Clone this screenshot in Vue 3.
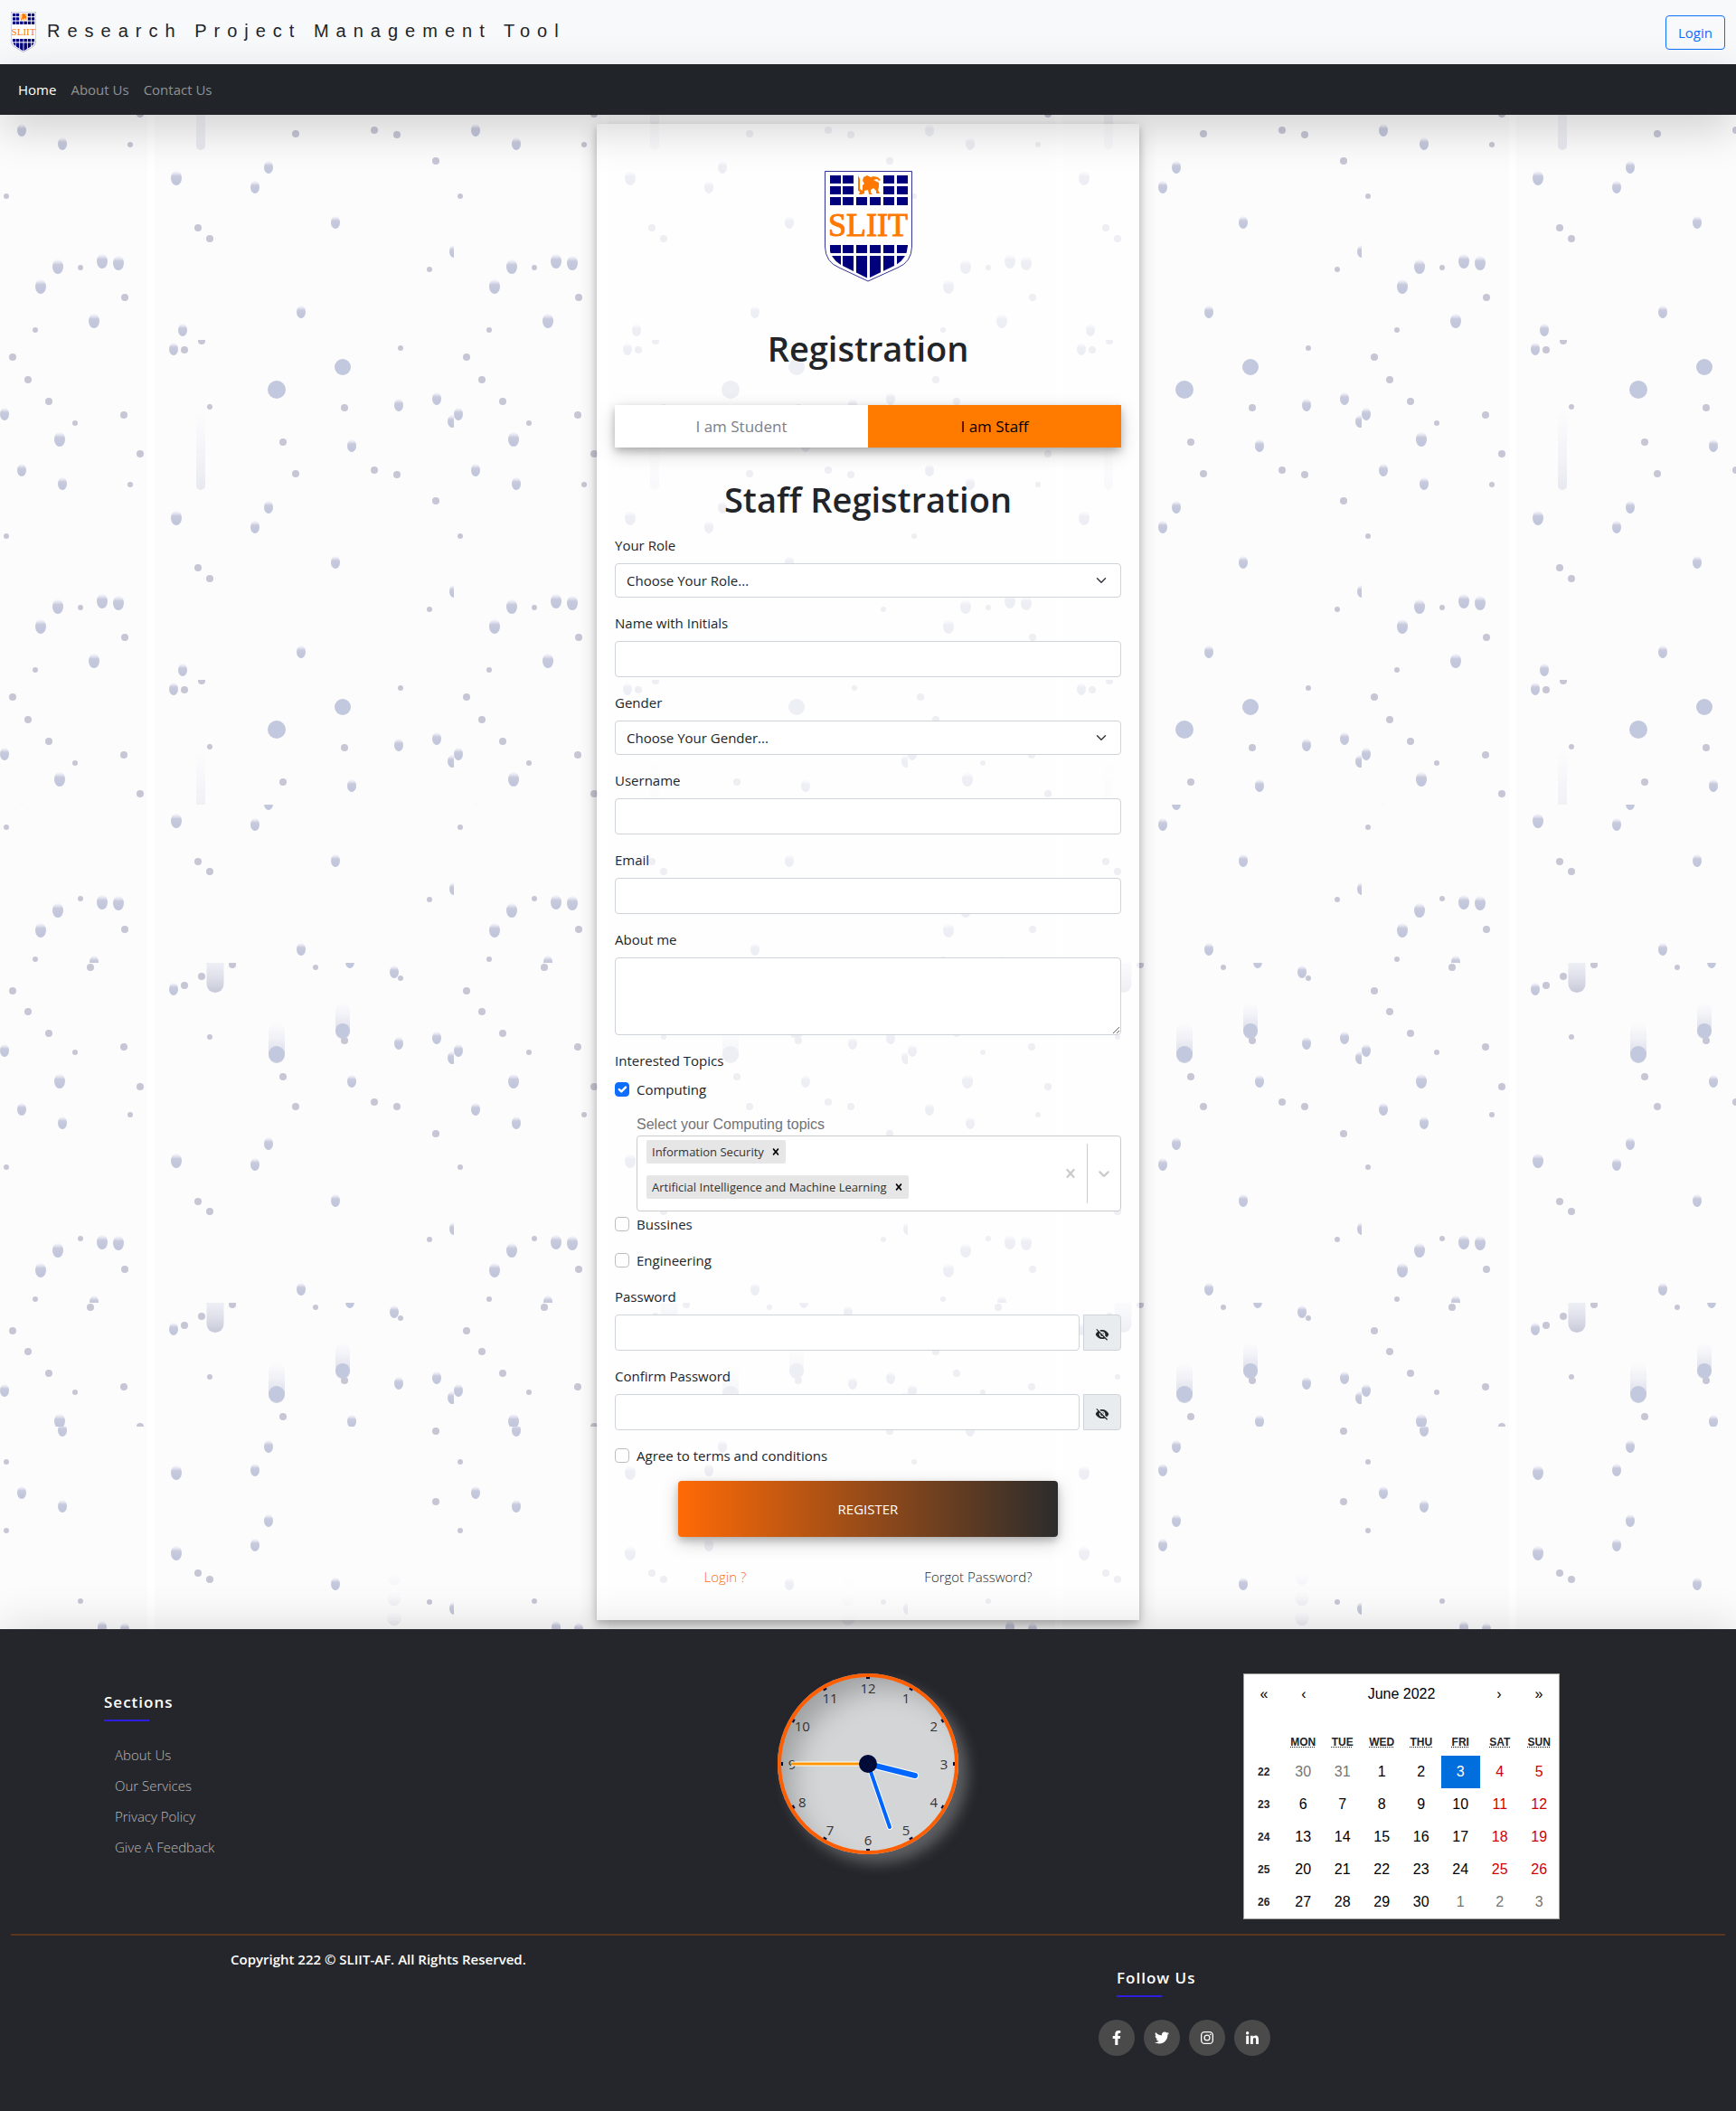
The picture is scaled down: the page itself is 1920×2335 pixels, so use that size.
<script setup>
import { ref } from 'vue'

// Rain-drop wallpaper: each frame is a list of [x, y, radius] drops on a 502px wide tile
const frames = [
  {
    id: 'rain-a', top: 0, height: 376,
    drops: [
      [14, 19, 4], [31, 44, 4], [54, 68, 4], [5, 83, 5], [83, 92, 3], [137, 83, 4], [66, 111, 6], [155, 126, 4],
      [24, 145, 5], [69, 160, 5], [144, 160, 3], [195, 198, 6], [7, 217, 3], [219, 252, 4], [232, 264, 4],
      [282, 208, 5], [297, 186, 5], [371, 247, 5], [64, 296, 6], [45, 318, 6], [89, 296, 3], [113, 290, 6],
      [131, 292, 6], [138, 329, 4], [104, 356, 6], [39, 365, 3], [333, 346, 5], [202, 366, 5], [475, 298, 3],
      [502, 279, 5], [192, 11, 5], [204, 11, 4], [223, 1, 4], [443, 9, 3], [379, 30, 9], [306, 55, 10],
      [232, 74, 3], [381, 75, 4], [313, 113, 4], [389, 118, 5], [327, 148, 4], [414, 144, 4], [439, 149, 4],
      [441, 73, 5], [483, 66, 5], [500, 91, 5], [482, 178, 4],
    ],
    trails: [[222, 75, 10, 91, 0.3]],
  },
  {
    id: 'rain-b', top: 689, height: 376,
    drops: [
      [100, 5, 4], [14, 31, 4], [31, 54, 4], [54, 78, 4], [5, 98, 5], [83, 99, 3], [137, 93, 4], [66, 132, 6],
      [155, 137, 4], [24, 163, 5], [69, 178, 5], [144, 168, 3], [195, 220, 6], [7, 226, 3], [219, 264, 4],
      [232, 275, 4], [282, 224, 5], [297, 201, 5], [371, 264, 5], [64, 319, 6], [45, 341, 6], [89, 305, 3],
      [113, 310, 6], [131, 311, 6], [138, 339, 4], [39, 372, 3], [104, 376, 5], [333, 362, 5], [475, 306, 3],
      [502, 295, 5], [192, 30, 5], [204, 25, 4], [223, 15, 4], [257, 2, 4], [349, 5, 3], [387, 0, 5],
      [436, 11, 5], [443, 17, 3], [232, 82, 3], [381, 86, 4], [313, 126, 4], [389, 132, 5], [327, 159, 4],
      [414, 154, 4], [439, 159, 4], [441, 90, 5], [483, 84, 5], [500, 106, 5], [482, 189, 4],
      [306, 101, 9], [379, 75, 8],
    ],
    trails: [[238, -20, 19, 53, 0.8], [379, 44, 16, 40, 0.7], [306, 66, 18, 45, 0.7]],
  },
  {
    id: 'rain-c', top: 1578, height: 376,
    drops: [
      [69, 5, 5], [7, 39, 3], [24, 74, 5], [69, 89, 5], [7, 115, 3], [195, 52, 6], [282, 49, 5], [297, 23, 5],
      [195, 141, 6], [282, 132, 5], [297, 105, 5], [219, 162, 4], [232, 169, 4], [371, 175, 5], [89, 193, 3],
      [113, 223, 5], [138, 225, 5], [475, 194, 3], [502, 202, 5], [482, 5, 4], [482, 83, 4],
    ],
    trails: [[436, 160, 15, 15, 0.1], [436, 182, 15, 16, 0.2], [436, 204, 15, 16, 0.3]],
  },
]
const strips = [
  { fill: 'rain-a', y: 127, h: 763 },
  { fill: 'rain-b', y: 890, h: 688 },
  { fill: 'rain-c', y: 1578, h: 4000 },
]

const shieldCols = [6, 20, 35, 50, 65, 80]
const topSquares = [5, 17, 29].flatMap((y, row) =>
  shieldCols.filter((x, i) => row === 2 || (i !== 2 && i !== 3)).map((x) => ({ x, y })))

const numbers = Array.from({ length: 12 }, (_, i) => {
  const a = ((i + 1) * Math.PI) / 6
  return { n: i + 1, x: 100 + 84 * Math.sin(a), y: 100 - 84 * Math.cos(a), deg: (i + 1) * 30 }
})

const weekdays = ['Mon', 'Tue', 'Wed', 'Thu', 'Fri', 'Sat', 'Sun']
const weeks = [
  { n: 22, days: [30, 31, 1, 2, 3, 4, 5] },
  { n: 23, days: [6, 7, 8, 9, 10, 11, 12] },
  { n: 24, days: [13, 14, 15, 16, 17, 18, 19] },
  { n: 25, days: [20, 21, 22, 23, 24, 25, 26] },
  { n: 26, days: [27, 28, 29, 30, 1, 2, 3] },
]
const dayClass = (w, d, i) => ({
  other: (w === 22 && d > 20) || (w === 26 && d < 10),
  weekend: i > 4 && !(w === 26),
  active: w === 22 && d === 3,
})

const sections = ['About Us', 'Our Services', 'Privacy Policy', 'Give A Feedback']
const socials = [
  { name: 'Facebook', box: '0 0 320 512', w: 10, d: 'M279.14 288l14.22-92.66h-88.91v-60.13c0-25.35 12.42-50.06 52.24-50.06h40.42V6.26S260.43 0 225.36 0c-73.22 0-121.08 44.38-121.08 124.72v70.62H22.89V288h81.39v224h100.17V288z' },
  { name: 'Twitter', box: '0 0 512 512', w: 16, d: 'M459.37 151.716c.325 4.548.325 9.097.325 13.645 0 138.72-105.583 298.558-298.558 298.558-59.452 0-114.68-17.219-161.137-47.106 8.447.974 16.568 1.299 25.34 1.299 49.055 0 94.213-16.568 130.274-44.832-46.132-.975-84.792-31.188-98.112-72.772 6.498.974 12.995 1.624 19.818 1.624 9.421 0 18.843-1.3 27.614-3.573-48.081-9.747-84.143-51.98-84.143-102.985v-1.299c13.969 7.797 30.214 12.67 47.431 13.319-28.264-18.843-46.781-51.005-46.781-87.391 0-19.492 5.197-37.36 14.294-52.954 51.655 63.675 129.3 105.258 216.365 109.807-1.624-7.797-2.599-15.918-2.599-24.04 0-57.828 46.782-104.934 104.934-104.934 30.213 0 57.502 12.67 76.67 33.137 23.715-4.548 46.456-13.32 66.599-25.34-7.798 24.366-24.366 44.833-46.132 57.827 21.117-2.273 41.584-8.122 60.426-16.243-14.292 20.791-32.161 39.308-52.628 54.253z' },
  { name: 'Instagram', box: '0 0 448 512', w: 14, d: 'M132 32h184a132 132 0 0 1 132 132v184a132 132 0 0 1-132 132H132A132 132 0 0 1 0 348V164A132 132 0 0 1 132 32zM132 74a90 90 0 0 0-90 90v184a90 90 0 0 0 90 90h184a90 90 0 0 0 90-90V164a90 90 0 0 0-90-90zM224 141a115 115 0 1 1 0 230a115 115 0 1 1 0-230zM224 182a74 74 0 1 0 0 148a74 74 0 1 0 0-148zM344 110a27 27 0 1 1 0 54a27 27 0 1 1 0-54z' },
  { name: 'LinkedIn', box: '0 0 448 448', w: 14, d: 'M100.28 448H7.4V148.9h92.88zM53.79 108.1C24.09 108.1 0 83.5 0 53.8a53.79 53.79 0 0 1 107.58 0c0 29.7-24.1 54.3-53.79 54.3zM447.9 448h-92.68V302.4c0-34.7-.7-79.2-48.29-79.2-48.29 0-55.69 37.7-55.69 76.7V448h-92.78V148.9h89.08v40.8h1.3c12.4-23.5 42.69-48.3 87.88-48.3 94 0 111.28 61.9 111.28 142.3V448z' },
]
const crossPath = 'M14.348 14.849c-0.469 0.469-1.229 0.469-1.697 0l-2.651-3.030-2.651 3.029c-0.469 0.469-1.229 0.469-1.697 0-0.469-0.469-0.469-1.229 0-1.697l2.758-3.15-2.759-3.152c-0.469-0.469-0.469-1.228 0-1.697s1.228-0.469 1.697 0l2.652 3.031 2.651-3.031c0.469-0.469 1.228-0.469 1.697 0s0.469 1.229 0 1.697l-2.758 3.152 2.758 3.15c0.469 0.469 0.469 1.229 0 1.698z'
const eyeOffPath = 'M12 7c2.76 0 5 2.24 5 5 0 .65-.13 1.26-.36 1.83l2.92 2.92c1.51-1.26 2.7-2.89 3.43-4.75-1.73-4.39-6-7.5-11-7.5-1.4 0-2.74.25-3.98.7l2.16 2.16C10.74 7.13 11.35 7 12 7zM2 4.27l2.28 2.28.46.46C3.08 8.3 1.78 10.02 1 12c1.73 4.39 6 7.5 11 7.5 1.55 0 3.03-.3 4.38-.84l.42.42L19.73 22 21 20.73 3.27 3 2 4.27zM7.53 9.8l1.55 1.55c-.05.21-.08.43-.08.65 0 1.66 1.34 3 3 3 .22 0 .44-.03.65-.08l1.55 1.55c-.67.33-1.41.53-2.2.53-2.76 0-5-2.24-5-5 0-.79.2-1.53.53-2.2zm4.31-.78l3.15 3.15.02-.16c0-1.66-1.34-3-3-3l-.17.01z'

const chips = ref(['Information Security', 'Artificial Intelligence and Machine Learning'])
const computing = ref(true)
const passwords = [
  { id: 'password', label: 'Password' },
  { id: 'confirm', label: 'Confirm Password' },
]
</script>

<template>
  <div class="page">
    <svg class="defs" width="0" height="0" aria-hidden="true">
      <defs>
        <clipPath id="shield-inner">
          <path d="M5 0H92V83Q91 97 79 104L48 119L18 104Q6 97 5 83Z" />
        </clipPath>
        <symbol id="shield" viewBox="0 0 97 123" preserveAspectRatio="none">
          <path d="M.5 .5H96.500V84Q96 101 81 107L48 122L16 107Q1 101 .5 84Z" fill="#fff" stroke="#00007d" stroke-width=".8" />
          <g fill="#00007d" clip-path="url(#shield-inner)">
            <rect v-for="s in topSquares" :key="s.x + '-' + s.y" :x="s.x" :y="s.y" width="12" height="9" />
            <rect v-for="x in shieldCols" :key="'m' + x" :x="x" y="82" width="12" height="9" />
            <rect v-for="x in shieldCols" :key="'b' + x" :x="x" y="94" width="12" height="28" />
          </g>
          <path fill="#ff7800" d="M37 5l2 4v11l3 2v-6l2-2-2-3 1-4 4-2 4 2 3-1 5 1 3 3-2 1-2-2-4 1 6 3v5l-1 3 2 4h-4v-3l-3-3-3 2v3l2 2h-4l-1-5-4 1v3l-3 1h-3l1-3-2-1z" />
        </symbol>
      </defs>
    </svg>

    <header class="topbar">
      <svg class="brand-logo" width="28" height="45" viewBox="0 0 28 45" role="img" aria-label="SLIIT">
        <use href="#shield" width="28" height="45" />
        <text class="logo-text" x="14" y="26" font-size="11">SLIIT</text>
      </svg>
      <span class="brand">Research Project Management Tool</span>
      <button class="login" type="button">Login</button>
    </header>
    <nav class="nav">
      <a href="#" class="current">Home</a>
      <a href="#">About Us</a>
      <a href="#">Contact Us</a>
    </nav>

    <main>
      <svg class="rain" aria-hidden="true">
        <defs>
          <linearGradient id="trail" x1="0" y1="0" x2="0" y2="1">
            <stop offset="0" stop-color="#dcdcee" stop-opacity="0" />
            <stop offset="1" stop-color="#b9bccf" />
          </linearGradient>
          <linearGradient id="drop" x1="0" y1="0" x2="0" y2="1">
            <stop offset="0" stop-color="#eeeefa" stop-opacity=".4" />
            <stop offset=".35" stop-color="#c8cadd" />
            <stop offset="1" stop-color="#bfc5db" />
          </linearGradient>
          <pattern v-for="f in frames" :id="f.id" :key="f.id" patternUnits="userSpaceOnUse" x="0" :y="f.top" width="502" :height="f.height">
            <rect x="163" width="8" height="376" fill="#fff" />
            <rect v-for="(t, i) in f.trails" :key="'t' + i" :x="t[0] - t[2] / 2" :y="t[1]" :width="t[2]" :height="t[3]" :rx="t[2] / 2" :opacity="t[4]" fill="url(#trail)" />
            <ellipse v-for="(d, i) in f.drops" :key="i" :cx="d[0]" :cy="d[2] > 7 || d[2] < 5 ? d[1] : d[1] - 1" :rx="d[2]" :ry="d[2] > 7 || d[2] < 5 ? d[2] : d[2] + 2" :fill="d[2] > 7 ? '#c2c8dd' : d[2] > 4 ? 'url(#drop)' : '#c6c6d5'" />
          </pattern>
        </defs>
        <g transform="translate(0 -127)">
          <rect v-for="s in strips" :key="s.fill" :y="s.y" width="100%" :height="s.h" :fill="`url(#${s.fill})`" />
        </g>
      </svg>

      <form class="card" @submit.prevent>
        <svg class="card-logo" width="97" height="123" viewBox="0 0 97 123" role="img" aria-label="SLIIT">
          <use href="#shield" width="97" height="123" />
          <text class="logo-text" x="48" y="72" font-size="36">SLIIT</text>
        </svg>
        <h1>Registration</h1>
        <div class="tabs">
          <button type="button">I am Student</button>
          <button type="button" class="on">I am Staff</button>
        </div>
        <h1 class="sub">Staff Registration</h1>

        <div class="field">
          <label for="role">Your Role</label>
          <select id="role"><option>Choose Your Role...</option></select>
        </div>
        <div class="field">
          <label for="name">Name with Initials</label>
          <input id="name" type="text">
        </div>
        <div class="field">
          <label for="gender">Gender</label>
          <select id="gender"><option>Choose Your Gender...</option></select>
        </div>
        <div class="field">
          <label for="username">Username</label>
          <input id="username" type="text">
        </div>
        <div class="field">
          <label for="email">Email</label>
          <input id="email" type="email">
        </div>
        <div class="field">
          <label for="about">About me</label>
          <textarea id="about"></textarea>
        </div>

        <div class="topics">
          <span class="label">Interested Topics</span>
          <label class="check"><input v-model="computing" type="checkbox">Computing</label>
          <div v-if="computing" class="multi-wrap">
            <span class="hint">Select your Computing topics</span>
            <div class="multi">
              <div class="chips">
                <span v-for="c in chips" :key="c" class="chip">{{ c }}
                  <button type="button" :aria-label="'Remove ' + c" @click="chips = chips.filter((x) => x !== c)">
                    <svg width="14" height="14" viewBox="0 0 20 20"><path :d="crossPath" /></svg>
                  </button>
                </span>
              </div>
              <button type="button" class="indicator" aria-label="Clear topics" @click="chips = []">
                <svg width="20" height="20" viewBox="0 0 20 20"><path :d="crossPath" /></svg>
              </button>
              <span class="separator"></span>
              <button type="button" class="indicator" aria-label="Open topics">
                <svg width="20" height="20" viewBox="0 0 20 20"><path d="M4.516 7.548c0.436-0.446 1.043-0.481 1.576 0l3.908 3.747 3.908-3.747c0.533-0.481 1.141-0.446 1.574 0 0.436 0.445 0.408 1.197 0 1.615-0.406 0.418-4.695 4.502-4.695 4.502-0.217 0.223-0.502 0.335-0.787 0.335s-0.57-0.112-0.789-0.335c0 0-4.287-4.084-4.695-4.502s-0.436-1.17 0-1.615z" /></svg>
              </button>
            </div>
          </div>
          <label class="check"><input type="checkbox">Bussines</label>
          <label class="check spaced"><input type="checkbox">Engineering</label>
        </div>

        <div v-for="p in passwords" :key="p.id" class="field">
          <label :for="p.id">{{ p.label }}</label>
          <div class="secret">
            <input :id="p.id" type="password">
            <button type="button" aria-label="Show password">
              <svg width="16" height="16" viewBox="0 0 24 24"><path :d="eyeOffPath" /></svg>
            </button>
          </div>
        </div>

        <label class="check"><input type="checkbox">Agree to terms and conditions</label>
        <button class="register" type="submit">REGISTER</button>
        <div class="links">
          <a href="#" class="orange">Login ?</a>
          <a href="#">Forgot Password?</a>
        </div>
      </form>
    </main>

    <footer>
      <div class="foot-top">
        <div class="sections">
          <h2>Sections</h2>
          <ul>
            <li v-for="s in sections" :key="s"><a href="#">{{ s }}</a></li>
          </ul>
        </div>

        <div class="clock">
          <svg width="200" height="200" viewBox="0 0 200 200" role="img" aria-label="Clock">
            <rect v-for="m in numbers" :key="'k' + m.n" x="98" y="4" width="4" height="2" fill="#000b3a" :transform="`rotate(${m.deg} 100 100)`" />
            <text v-for="m in numbers" :key="m.n" :x="m.x" :y="m.y + 6" text-anchor="middle">{{ m.n }}</text>
            <g stroke="#fff" stroke-linecap="round">
              <path d="M100 100L152 113" stroke-width="8" />
              <path d="M100 100L124 170" stroke-width="6" />
              <path d="M100 100H15" stroke-width="5" stroke-linecap="butt" />
            </g>
            <g stroke="#0066ff" stroke-linecap="round">
              <path d="M100 100L152 113" stroke-width="6" />
              <path d="M100 100L124 170" stroke-width="4" />
              <path d="M100 100H15" stroke="#ff9500" stroke-width="3" stroke-linecap="butt" />
            </g>
            <circle cx="100" cy="100" r="10" fill="#000b3a" />
          </svg>
        </div>

        <div class="calendar-col">
          <div class="calendar">
            <div class="cal-nav">
              <button type="button" aria-label="Previous year">«</button>
              <button type="button" aria-label="Previous month">‹</button>
              <button type="button" class="month">June 2022</button>
              <button type="button" aria-label="Next month">›</button>
              <button type="button" aria-label="Next year">»</button>
            </div>
            <table>
              <thead>
                <tr><td></td><th v-for="d in weekdays" :key="d" scope="col"><abbr :title="d">{{ d }}</abbr></th></tr>
              </thead>
              <tbody>
                <tr v-for="w in weeks" :key="w.n">
                  <th scope="row">{{ w.n }}</th>
                  <td v-for="(d, i) in w.days" :key="i" :class="dayClass(w.n, d, i)">{{ d }}</td>
                </tr>
              </tbody>
            </table>
          </div>
        </div>
      </div>
      <hr>
      <div class="foot-bottom">
        <p>Copyright 222 © SLIIT-AF. All Rights Reserved.</p>
        <div class="follow">
          <h2>Follow Us</h2>
          <div class="socials">
            <a v-for="s in socials" :key="s.name" href="#" :aria-label="s.name">
              <svg :width="s.w" :height="s.name === 'LinkedIn' ? 14 : 16" :viewBox="s.box"><path fill-rule="evenodd" :d="s.d" /></svg>
            </a>
          </div>
        </div>
      </div>
    </footer>
  </div>
</template>

<style>
body { margin: 0; }
</style>

<style scoped>
.page, .page * { box-sizing: border-box; }
.page {
  font: 15px/24px "Open Sans", "Noto Sans", sans-serif;
  color: #212529;
  background: #fcfcfd;
}
.defs { position: absolute; }
a { text-decoration: none; color: inherit; }
button { font: inherit; color: inherit; cursor: pointer; padding: 0; border: 0; background: none; }
.logo-text {
  font-family: "Liberation Serif", serif;
  font-weight: 400;
  fill: #ff7800;
  stroke: #ff7800;
  stroke-width: 1px;
  text-anchor: middle;
}
.brand-logo .logo-text { stroke-width: 0; }

.topbar { display: flex; align-items: center; height: 71px; padding: 0 12px; background: #f8f9fa; }
.brand { flex: 1; margin: 0 0 4px 12px; font: 20px/30px "Liberation Sans", sans-serif; letter-spacing: 8px; }
.login { width: 66px; height: 38px; border: 1px solid #0d6efd; border-radius: 4px; color: #0d6efd; }

.nav {
  position: relative;
  z-index: 2;
  display: flex;
  align-items: center;
  gap: 16px;
  height: 56px;
  padding: 0 20px;
  background: #212529;
  color: #909294;
  box-shadow: 0 16px 48px rgba(0, 0, 0, .175);
}
.nav .current { color: #fff; }

main { position: relative; z-index: 0; padding: 10px 12px; }
.rain { position: absolute; z-index: -1; top: 0; left: 0; width: 100%; height: 100%; overflow: hidden; }

.card {
  display: flex;
  flex-direction: column;
  max-width: 600px;
  margin: 0 auto;
  padding: 52px 20px 36px;
  background: rgba(255, 255, 255, .7);
  box-shadow: 0 4px 8px rgba(0, 0, 0, .2), 0 6px 20px rgba(0, 0, 0, .19);
}
.card-logo { align-self: center; }
h1 { margin: 49px 0 39px; font-size: 38px; line-height: 48px; font-weight: 600; text-align: center; }
h1.sub { margin: 33px 0 15px; }
.tabs { display: flex; height: 47px; box-shadow: 0 4px 8px rgba(0, 0, 0, .2), 0 6px 20px rgba(0, 0, 0, .19); }
.tabs button { flex: 1; background: #fff; color: #808080; font-size: 17px; }
.tabs .on { background: #ff7b00; color: #000; }

.field { display: flex; flex-direction: column; gap: 8px; margin-bottom: 16px; }
input, select, textarea {
  font: inherit;
  color: #212529;
  border: 1px solid #ced4da;
  border-radius: 4px;
  background-color: #fff;
  margin: 0;
}
input { height: 40px; padding: 0 12px; min-width: 0; }
textarea { display: block; height: 86px; padding: 6px 12px; resize: vertical; }
select {
  appearance: none;
  height: 38px;
  padding: 0 36px 0 12px;
  background: #fff url("data:image/svg+xml,%3csvg xmlns='http://www.w3.org/2000/svg' viewBox='0 0 16 16'%3e%3cpath fill='none' stroke='%23343a40' stroke-linecap='round' stroke-linejoin='round' stroke-width='2' d='M2 5l6 6 6-6'/%3e%3c/svg%3e") no-repeat right 15px center / 12px 12px;
}
.topics { display: flex; flex-direction: column; margin-bottom: 16px; }
.label { margin-bottom: 8px; }
.check { display: flex; align-items: center; gap: 8px; }
.check.spaced { margin-top: 16px; }
.check input { appearance: none; width: 16px; height: 16px; padding: 0; border-color: #bfbfbf; }
.check input:checked {
  border-color: #0d6efd;
  background: #0d6efd url("data:image/svg+xml,%3csvg xmlns='http://www.w3.org/2000/svg' viewBox='0 0 20 20'%3e%3cpath fill='none' stroke='%23fff' stroke-linecap='round' stroke-linejoin='round' stroke-width='3' d='M6 10l3 3 6-6'/%3e%3c/svg%3e") center / 16px 16px;
}
.multi-wrap { display: flex; flex-direction: column; margin: 15px 0 2px 24px; }
.hint { font-family: "Liberation Sans", sans-serif; font-size: 16px; color: #737373; }
.multi { display: flex; align-items: center; min-height: 84px; border: 1px solid #ccc; border-radius: 4px; background: #fff; }
.chips { flex: 1; display: flex; flex-direction: column; align-items: flex-start; gap: 13px; padding: 0 10px 9px; }
.chip { display: flex; align-items: center; height: 26px; padding-left: 6px; border-radius: 2px; background: #e6e6e6; font-size: 13px; color: #333; }
.chip button { display: flex; align-items: center; height: 26px; padding: 0 4px; margin-left: 2px; }
.indicator { display: flex; padding: 8px; fill: #ccc; }
.separator { align-self: stretch; width: 1px; margin: 8px 0; background: #ccc; }

.secret { display: flex; gap: 4px; }
.secret input { flex: 1; }
.secret button {
  display: flex;
  align-items: center;
  justify-content: center;
  width: 42px;
  padding-top: 4px;
  border: 1px solid #ced4da;
  border-radius: 0 4px 4px 0;
  background: #e9ecef;
  fill: #212529;
}
.register {
  align-self: center;
  width: 75%;
  height: 62px;
  margin: 16px 0 32px;
  border-radius: 4px;
  background: linear-gradient(90deg, #ff6a06, #2c2c2c);
  box-shadow: 0 4px 8px rgba(0, 0, 0, .2), 0 6px 20px rgba(0, 0, 0, .19);
  color: #fff;
}
.links { display: flex; justify-content: space-around; font-weight: 300; }
.orange { color: #ff6a06; }

footer {
  position: relative;
  padding: 49px 0 62px;
  background: #24262b;
  box-shadow: 0 0 48px rgba(0, 0, 0, .15);
  color: #fff;
}
.foot-top { display: grid; grid-template-columns: 1fr 1fr 1fr; padding: 0 12px; }
.sections { padding: 20px 0 0 103px; }
h2 { margin: 0; font-size: 17px; line-height: 24px; font-weight: 600; letter-spacing: 1px; }
h2::after { content: ""; display: block; width: 50px; height: 2px; margin-top: 7px; background: #2c1de0; }
ul { list-style: none; margin: 0; padding: 20px 0 0 12px; font-size: 15px; line-height: 34px; font-weight: 300; color: #bbb; }
.clock {
  justify-self: center;
  align-self: start;
  width: 200px;
  height: 200px;
  border-radius: 50%;
  background: #d3d5d7;
  box-shadow: inset 0 0 0 4px #ff5e00, inset 20px 20px 30px -5px rgba(0, 0, 0, .25), 10px 10px 15px rgba(200, 200, 200, .35);
}
.clock svg { display: block; }
.clock text { font-size: 15px; fill: #333; }
.calendar-col { padding-left: 99px; }
.calendar { width: 350px; border: 1px solid #a0a096; background: #fff; color: #000; font: 16px/20px "Liberation Sans", sans-serif; }
.cal-nav { display: flex; height: 44px; margin-bottom: 16px; }
.cal-nav button { width: 44px; }
.cal-nav .month { flex: 1; }
table { width: 100%; table-layout: fixed; border-collapse: collapse; text-align: center; }
th, td { padding: 0; height: 36px; }
thead th, thead td { height: 30px; }
th { font-size: 12px; color: #212529; }
thead th { text-transform: uppercase; }
tbody th { font-size: 12px; }
td.weekend { color: #d10000; }
td.other { color: #757575; }
td.active { background: #006edc; color: #fff; }

hr { height: 2px; margin: 16px 12px 14px; border: 0; background: #5c351f; }
.foot-bottom { display: grid; grid-template-columns: 1fr 1fr; font-size: 15px; font-weight: 600; }
.foot-bottom p { margin: 0 0 0 255px; }
.follow { padding: 21px 0 0 255px; }
.follow h2 { margin-left: 20px; }
.socials { display: flex; gap: 10px; margin-top: 25px; }
.socials a { display: flex; align-items: center; justify-content: center; width: 40px; height: 40px; border-radius: 50%; background: #4a4a4a; fill: #fff; }
</style>
